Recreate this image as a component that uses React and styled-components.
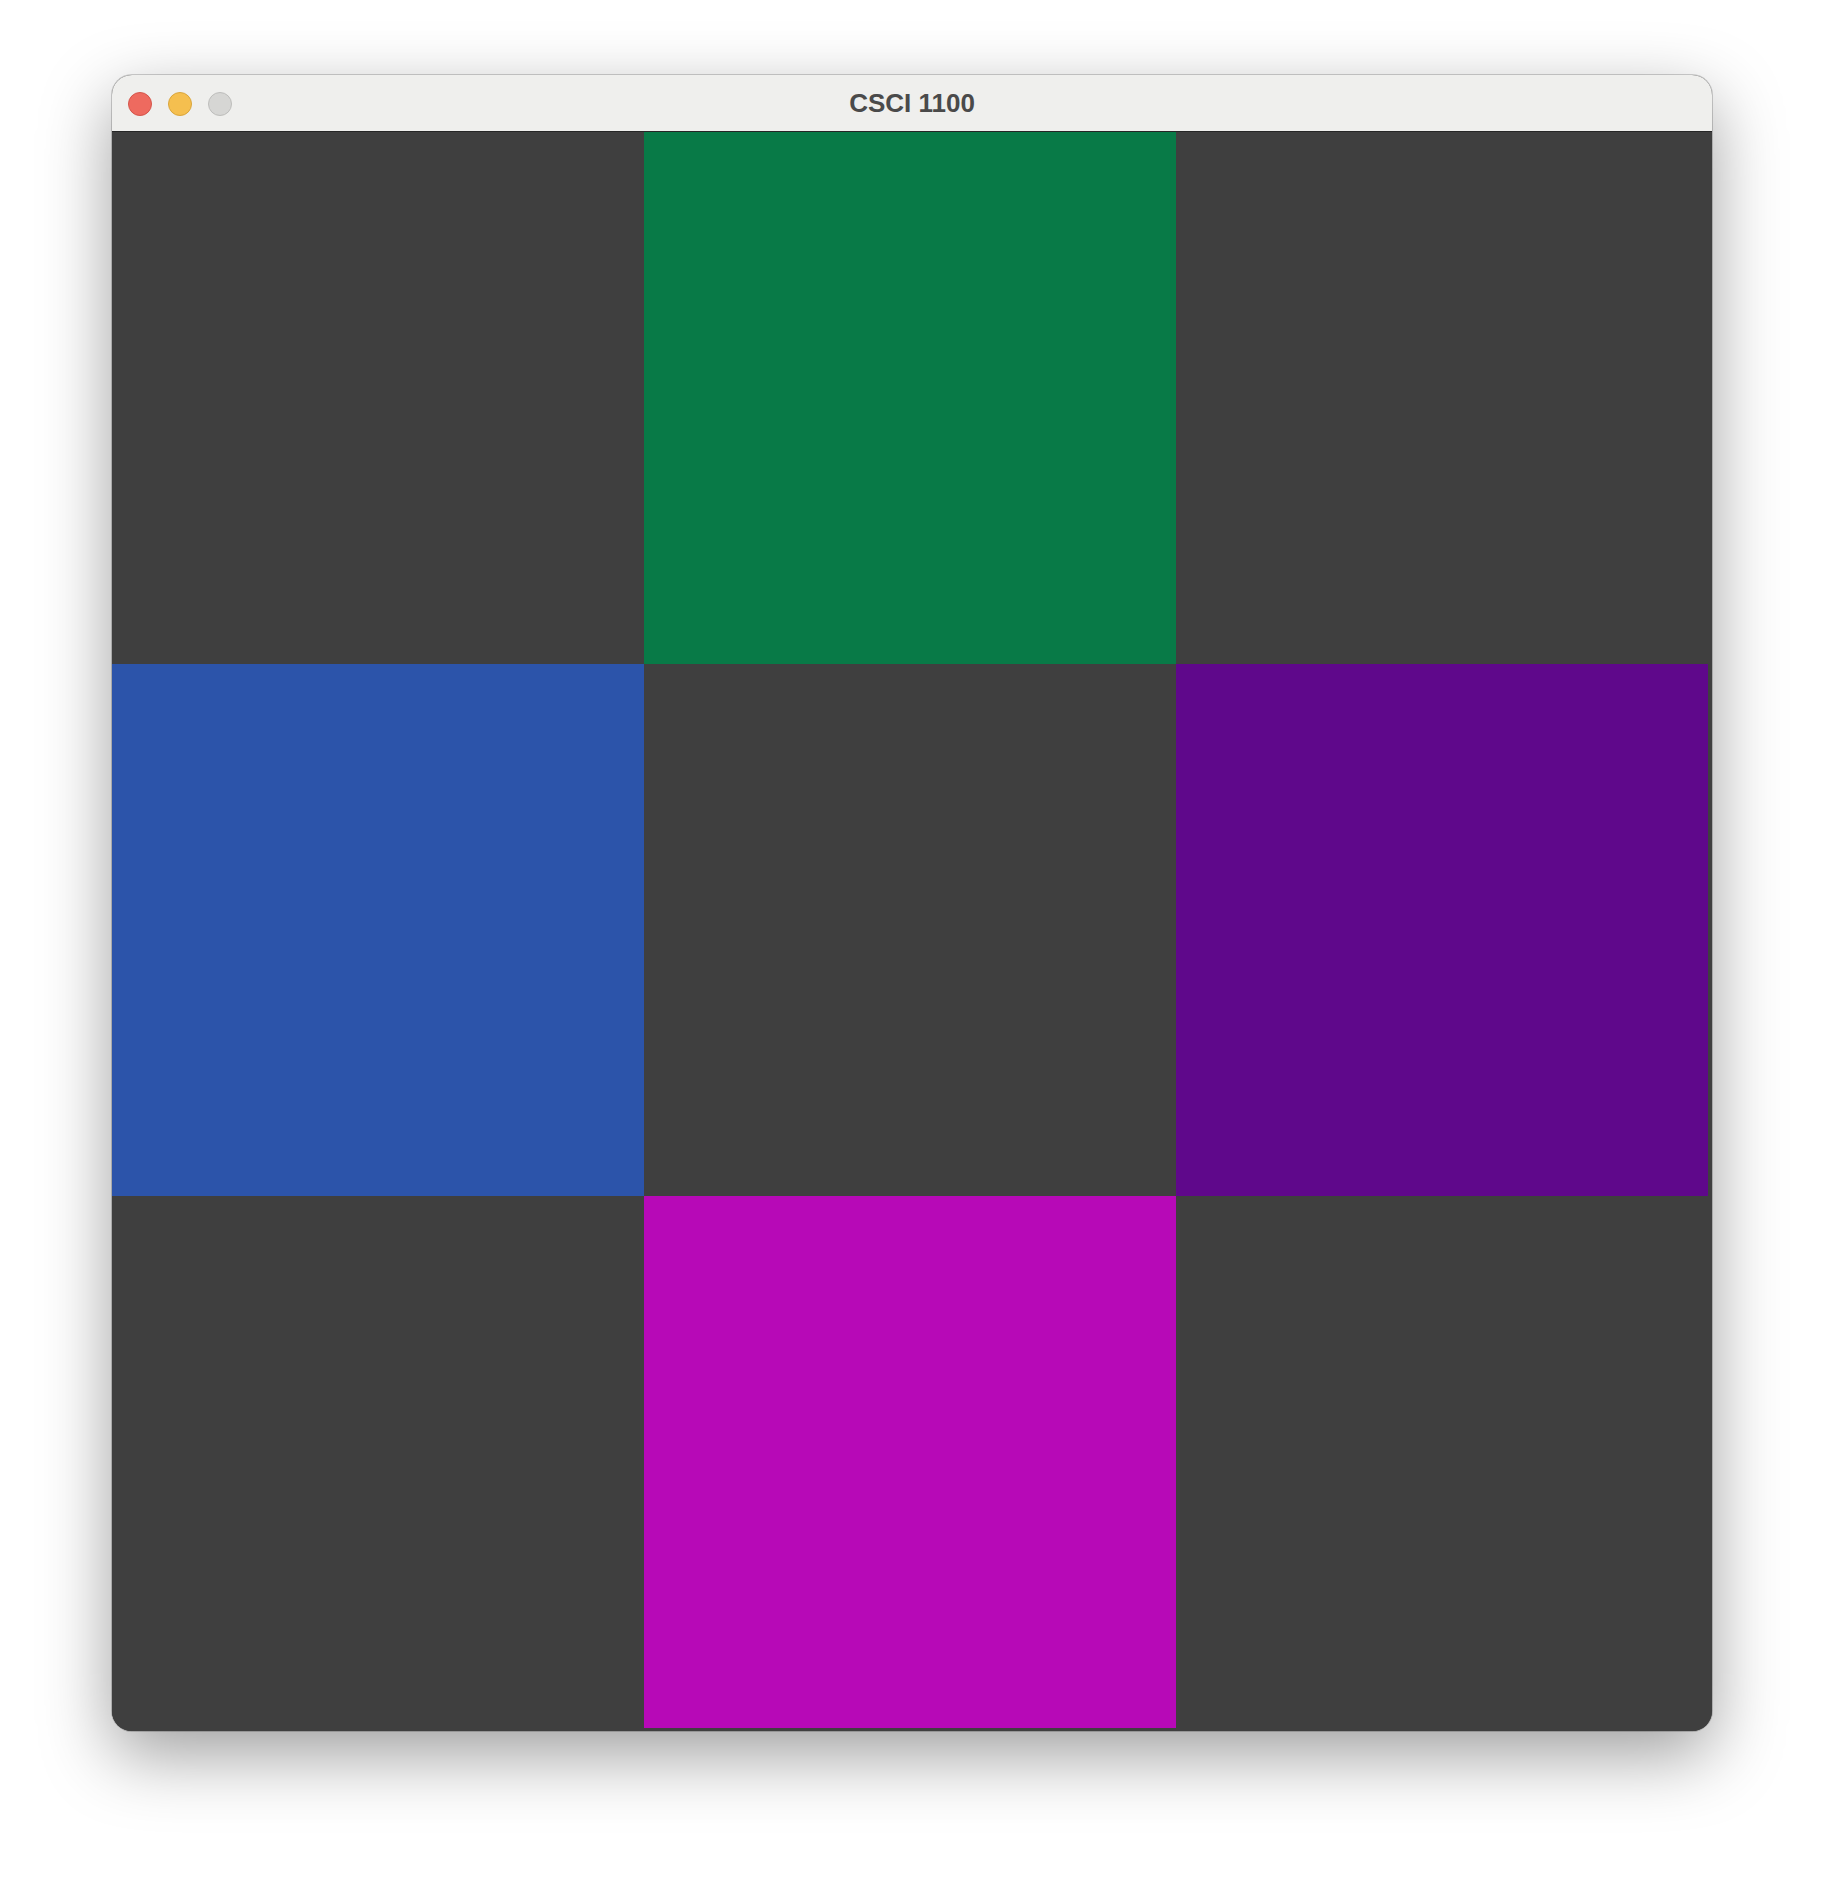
import React from 'react'
import styled, { createGlobalStyle } from 'styled-components'

const GlobalStyle = createGlobalStyle`
    html, body {
        margin: 0;
        padding: 0;
        background: #ffffff;
        font-family: "Liberation Sans", Arial, sans-serif;
    }
`
const Page = styled.div`
    width: 1824px;
    height: 1880px;
    padding: 75px 0 0 112px;
    box-sizing: border-box;
`
const Window = styled.div`
    width: 1600px;
    height: 1656px;
    border-radius: 20px;
    overflow: hidden;
    display: flex;
    flex-direction: column;
    background: #3f3f3f;
    box-shadow: 0 0 0 1px rgba(0, 0, 0, 0.18), 0 24px 70px rgba(0, 0, 0, 0.38);
`
const TitleBar = styled.div`
    position: relative;
    height: 56px;
    flex: none;
    background: #efefed;
    border-bottom: 1px solid #262626;
    display: flex;
    align-items: center;
    justify-content: center;
`
const Lights = styled.div`
    position: absolute;
    left: 16px;
    top: 17px;
    display: flex;
    gap: 16px;
`
const Light = styled.span`
    box-sizing: border-box;
    width: 24px;
    height: 24px;
    border-radius: 50%;
    background: ${p => p.color};
    border: 1px solid ${p => p.edge};
`
const Title = styled.div`
    font-size: 26px;
    font-weight: bold;
    color: #4a4a4a;
    margin-top: 1px;
`
const Board = styled.div`
    display: grid;
    grid-template-columns: repeat(3, 532px);
    grid-template-rows: repeat(3, 532px);
    background: #3f3f3f;
    flex: 1;
`
const Cell = styled.div`
    background: ${p => p.fill || '#3f3f3f'};
`

const cells = [
    null, '#087a47', null,
    '#2c54aa', null, '#5f088b',
    null, '#b709b7', null,
]

export default function App() {
    return (
        <Page>
            <GlobalStyle />
            <Window>
                <TitleBar>
                    <Lights>
                        <Light color="#ee6a5f" edge="#d4554b" />
                        <Light color="#f5bf4f" edge="#d9a53c" />
                        <Light color="#d6d6d4" edge="#bdbdbb" />
                    </Lights>
                    <Title>CSCI 1100</Title>
                </TitleBar>
                <Board>
                    {cells.map((c, i) => <Cell key={i} fill={c} />)}
                </Board>
            </Window>
        </Page>
    )
}
